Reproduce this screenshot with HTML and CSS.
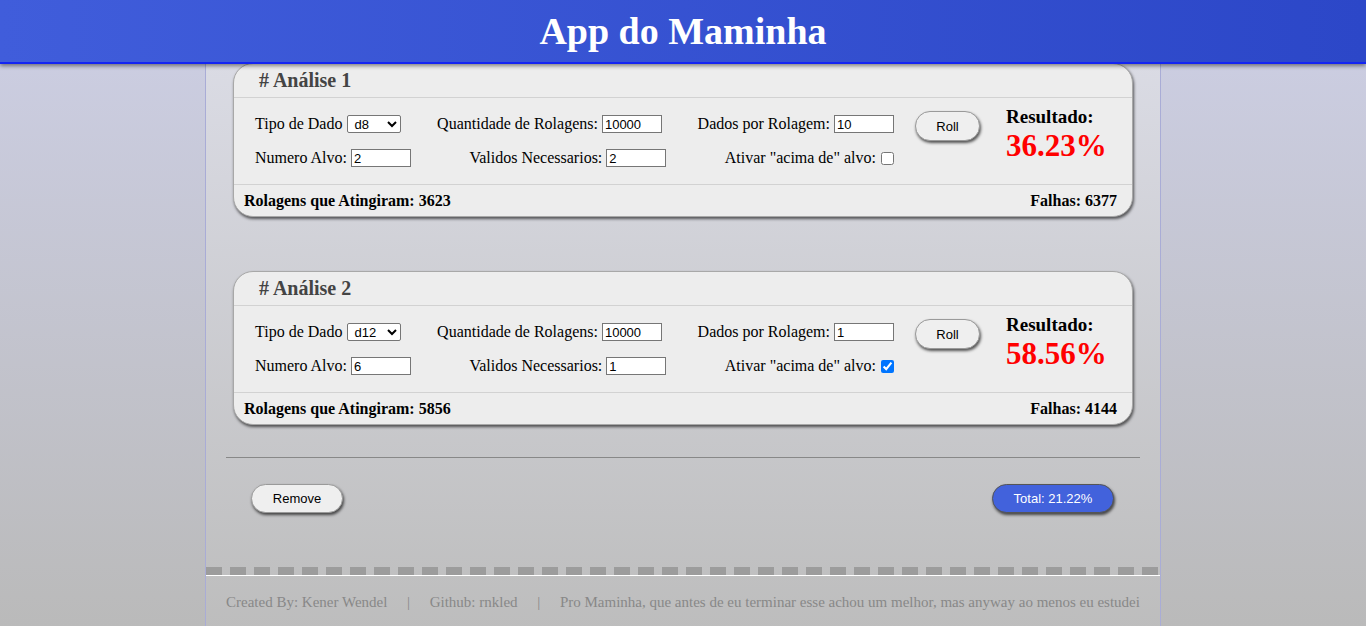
FILE: index.html
```html
<!DOCTYPE html>
<html>
<head>
	<meta charset="utf-8">
	<title>App do Maminha</title>
	<link rel="stylesheet" href="styles.css">
</head>
<body>
	<header class="topbar">
		<h1>App do Maminha</h1>
	</header>
	<div class="page">
		<main class="content">
			<section class="card">
				<div class="card-head"># Análise 1</div>
				<div class="card-body">
					<div class="fields">
						<div class="row">
							<label>Tipo de Dado <select><option>d8</option><option>d12</option></select></label>
							<label>Quantidade de Rolagens: <input type="text" value="10000"></label>
							<label>Dados por Rolagem: <input type="text" value="10"></label>
						</div>
						<div class="row">
							<label>Numero Alvo: <input type="text" value="2"></label>
							<label>Validos Necessarios: <input type="text" value="2"></label>
							<label>Ativar "acima de" alvo: <input type="checkbox"></label>
						</div>
					</div>
					<button class="pill roll">Roll</button>
					<div class="result">
						<div class="result-label">Resultado:</div>
						<div class="result-value">36.23%</div>
					</div>
				</div>
				<div class="card-foot">
					<span>Rolagens que Atingiram: 3623</span>
					<span>Falhas: 6377</span>
				</div>
			</section>

			<section class="card">
				<div class="card-head"># Análise 2</div>
				<div class="card-body">
					<div class="fields">
						<div class="row">
							<label>Tipo de Dado <select><option>d12</option><option>d8</option></select></label>
							<label>Quantidade de Rolagens: <input type="text" value="10000"></label>
							<label>Dados por Rolagem: <input type="text" value="1"></label>
						</div>
						<div class="row">
							<label>Numero Alvo: <input type="text" value="6"></label>
							<label>Validos Necessarios: <input type="text" value="1"></label>
							<label>Ativar "acima de" alvo: <input type="checkbox" checked></label>
						</div>
					</div>
					<button class="pill roll">Roll</button>
					<div class="result">
						<div class="result-label">Resultado:</div>
						<div class="result-value">58.56%</div>
					</div>
				</div>
				<div class="card-foot">
					<span>Rolagens que Atingiram: 5856</span>
					<span>Falhas: 4144</span>
				</div>
			</section>

			<hr class="divider">
			<div class="actions">
				<button class="pill remove">Remove</button>
				<button class="pill total">Total: 21.22%</button>
			</div>
		</main>
		<div class="dashes"></div>
		<footer class="credits">
			<span>Created By: Kener Wendel</span>
			<span>|</span>
			<span>Github: rnkled</span>
			<span>|</span>
			<span>Pro Maminha, que antes de eu terminar esse achou um melhor, mas anyway ao menos eu estudei</span>
		</footer>
	</div>
</body>
</html>
```

FILE: styles.css
```css
html {
	height: 100%;
}
body {
	margin: 0;
	min-height: 100%;
	font-family: "Liberation Serif", "Times New Roman", serif;
	background: linear-gradient(#cdcfe5, #bababa) fixed;
}
.topbar {
	position: relative;
	z-index: 2;
	height: 62px;
	display: flex;
	align-items: center;
	justify-content: center;
	background: linear-gradient(to right, #405ddb, #2c47c8);
	border-bottom: 2px solid #1424f2;
	box-shadow: 0 2px 4px rgba(0, 0, 0, .45);
}
.topbar h1 {
	margin: 0;
	color: #fff;
	font-size: 38px;
	font-weight: bold;
}
.page {
	width: 954px;
	margin: 0 auto;
	border-left: 1px solid #a9acd6;
	border-right: 1px solid #a9acd6;
	background: linear-gradient(#dadbe4, #bdbdbd);
}
.content {
	margin-top: -1px;
	padding: 0 20px 54px;
}
.card {
	width: 898px;
	margin: 0 auto 54px;
	background: #ededed;
	border: 1px solid #a8a8a8;
	border-radius: 20px;
	box-shadow: 1px 2px 3px rgba(0, 0, 0, .6);
}
.card + .card {
	margin-bottom: 0;
}
.card-head {
	height: 33px;
	line-height: 33px;
	padding-left: 25px;
	font-size: 20px;
	font-weight: bold;
	color: #444;
	border-bottom: 1px solid #d2d2d2;
}
.card-body {
	height: 86px;
	display: flex;
	align-items: flex-start;
	padding-left: 21px;
	border-bottom: 1px solid #d2d2d2;
}
.fields {
	width: 639px;
	padding-top: 17px;
}
.row {
	height: 18px;
	display: flex;
	justify-content: space-between;
	align-items: center;
	font-size: 16px;
}
.row + .row {
	margin-top: 16px;
}
.row label {
	display: flex;
	align-items: center;
	white-space: pre;
}
.row input[type="text"] {
	box-sizing: border-box;
	width: 60px;
	height: 18px;
	margin: 0;
	padding: 0 2px;
	border: 1px solid #767676;
	font: 13px Arial, "Liberation Sans", sans-serif;
}
.row select {
	box-sizing: border-box;
	width: 54px;
	height: 18px;
	margin: 0 0 0 1px;
	padding: 0 0 0 2px;
	border: 1px solid #767676;
	border-radius: 2px;
	background: #fff;
	font: 13px Arial, "Liberation Sans", sans-serif;
}
.row input[type="checkbox"] {
	width: 13px;
	height: 13px;
	margin: 0 0 0 1px;
}
.pill {
	height: 30px;
	border: 1px solid #9a9a9a;
	border-radius: 15px;
	background: #efefef;
	box-shadow: 1px 2px 3px rgba(0, 0, 0, .65);
	font: 13px Arial, "Liberation Sans", sans-serif;
	color: #000;
	padding: 0;
}
.roll {
	width: 65px;
	margin: 13px 0 0 21px;
}
.result {
	margin: 8px 0 0 26px;
	font-weight: bold;
}
.result-label {
	font-size: 19px;
}
.result-value {
	font-size: 31px;
	color: #ff0000;
}
.card-foot {
	height: 31px;
	display: flex;
	justify-content: space-between;
	align-items: center;
	padding: 0 15px 0 10px;
	font-size: 16px;
	font-weight: bold;
}
.divider {
	margin: 32px 0 0;
	border: 0;
	border-top: 1px solid #888;
}
.actions {
	display: flex;
	justify-content: space-between;
	padding: 26px 26px 0 25px;
}
.remove {
	width: 92px;
	height: 29px;
}
.total {
	width: 122px;
	height: 29px;
	background: #4262dc;
	border-color: #555;
	color: #fff;
}
.dashes {
	height: 8px;
	background: repeating-linear-gradient(to right, #9c9c9c 0 16px, transparent 16px 24px);
}
.credits {
	display: flex;
	justify-content: space-between;
	padding: 18px 20px 20px;
	border-top: 1px solid #fff;
	font-size: 15px;
	color: #888;
}
```
